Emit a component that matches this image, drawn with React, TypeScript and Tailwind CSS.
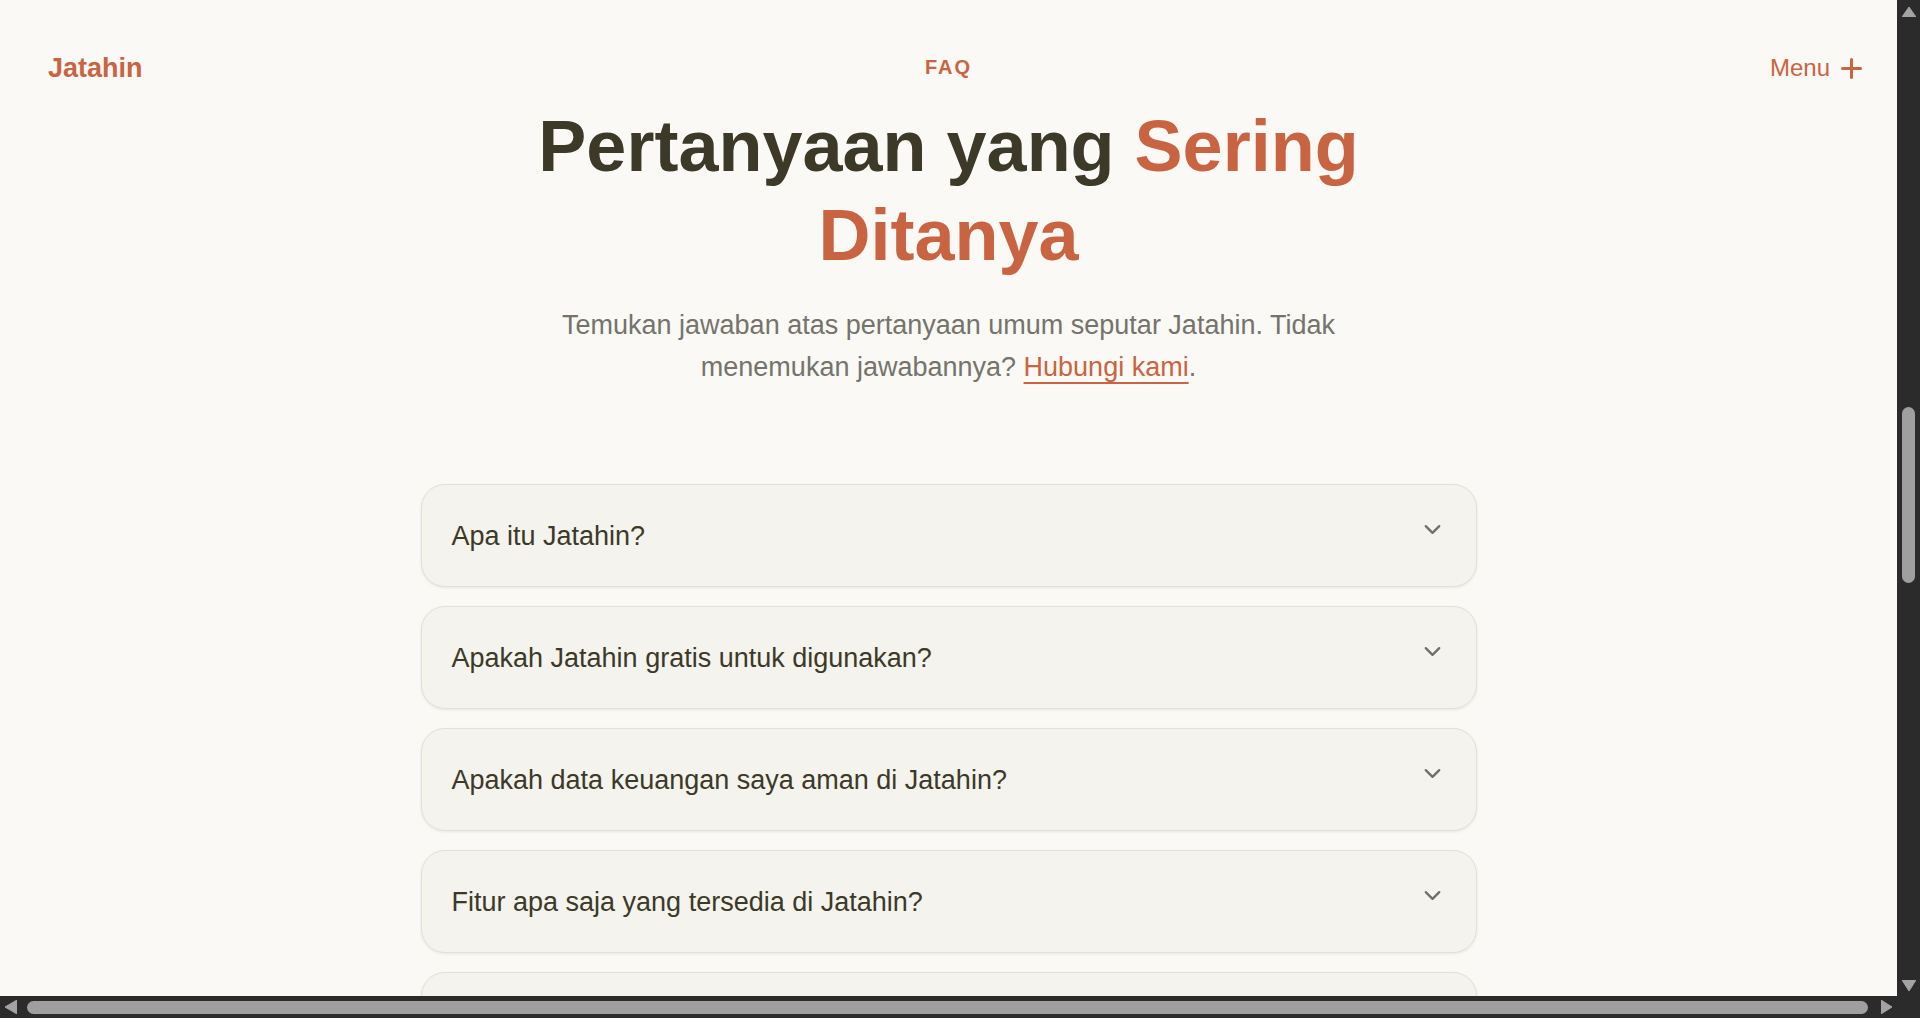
import { useState } from 'react'
//Icons
import { ChevronDown } from 'lucide-react'

interface IFaq {
  question: string
  answer: string
}

const faqs: IFaq[] = [
  {
    question: 'Apa itu Jatahin?',
    answer: 'Jatahin adalah aplikasi untuk membagi dan mencatat jatah keuangan harianmu dengan mudah.',
  },
  {
    question: 'Apakah Jatahin gratis untuk digunakan?',
    answer: 'Ya, semua fitur utama Jatahin bisa digunakan secara gratis.',
  },
  {
    question: 'Apakah data keuangan saya aman di Jatahin?',
    answer: 'Data kamu disimpan dengan enkripsi dan tidak pernah dibagikan ke pihak lain.',
  },
  {
    question: 'Fitur apa saja yang tersedia di Jatahin?',
    answer: 'Pencatatan pengeluaran, pembagian jatah, laporan bulanan, dan pengingat tagihan.',
  },
  {
    question: 'Bagaimana cara mulai menggunakan Jatahin?',
    answer: 'Daftar dengan email kamu, lalu atur jatah pertama dalam hitungan menit.',
  },
]

const FaqItem: React.FC<IFaq> = ({ question, answer }) => {
  const [open, setOpen] = useState(false)

  return (
    <div className="w-[1056px] mx-auto rounded-[24px] border border-[#e2e0d9] bg-[#f4f3ee] shadow-[0_1px_3px_rgba(0,0,0,0.08)]">
      <button
        onClick={() => setOpen(!open)}
        className="flex w-full items-start justify-between px-[30px] pt-[31px] pb-[29px] text-left"
      >
        <span className="text-[27px] leading-[41px] text-[#3d3929]">{question}</span>
        <ChevronDown
          size={27}
          strokeWidth={2}
          className={`shrink-0 text-[#6f6e69] transition-transform ${open ? 'rotate-180' : ''}`}
        />
      </button>
      {open && (
        <p className="px-[30px] pb-[30px] -mt-[12px] text-[24px] leading-[38px] text-[#75736c]">{answer}</p>
      )}
    </div>
  )
}

// dark classic scrollbar pieces
const Tri = ({ dir, w, h }: { dir: 'up' | 'down' | 'left' | 'right'; w: number; h: number }) => {
  const points = {
    up: `${w / 2},0 ${w},${h} 0,${h}`,
    down: `0,0 ${w},0 ${w / 2},${h}`,
    left: `${w},0 ${w},${h} 0,${h / 2}`,
    right: `0,0 ${w},${h / 2} 0,${h}`,
  }[dir]
  return (
    <svg width={w} height={h} viewBox={`0 0 ${w} ${h}`} className="shrink-0">
      <polygon points={points} fill="#a3a3a3" stroke="#a3a3a3" strokeWidth={1} strokeLinejoin="round" />
    </svg>
  )
}

const App = () => {
  return (
    <div className="flex h-screen w-screen flex-col overflow-hidden bg-[#2b2b2b] font-['Liberation_Sans',Arial,sans-serif]">
      <div className="flex min-h-0 flex-1">
        <main className="min-w-0 flex-1 overflow-hidden bg-[#faf9f5]">
          <header className="mt-[48px] grid h-[40px] grid-cols-[1fr_auto_1fr] items-center px-[35px]">
            <a className="ml-[13px] justify-self-start text-[27px] font-bold text-[#c96442]">Jatahin</a>
            <span className="-mt-[2px] text-[20px] font-bold tracking-[2px] text-[#c96442]">FAQ</span>
            <button className="flex items-center gap-[11px] justify-self-end text-[24px] text-[#c96442]">
              Menu
              <svg width="21" height="21" viewBox="0 0 21 21">
                <path d="M10.5 1.5v18M1.5 10.5h18" stroke="currentColor" strokeWidth="3" strokeLinecap="round" />
              </svg>
            </button>
          </header>

          <section className="text-center">
            <h1 className="mx-auto mt-[14px] max-w-[900px] text-[72px] font-bold leading-[89px] text-[#3d3929]">
              Pertanyaan yang <span className="text-[#c96442]">Sering Ditanya</span>
            </h1>
            <p className="mx-auto mt-[24px] max-w-[840px] text-[27px] leading-[42px] text-[#75736c]">
              Temukan jawaban atas pertanyaan umum seputar Jatahin. Tidak menemukan jawabannya?{' '}
              <a className="text-[#c96442] underline decoration-[2px] underline-offset-[6px]">Hubungi kami</a>.
            </p>
          </section>

          <div className="mt-[96px] flex flex-col gap-[19px]">
            {faqs.map((faq) => (
              <FaqItem key={faq.question} {...faq} />
            ))}
          </div>
        </main>

        <div className="flex w-[23px] shrink-0 flex-col items-center bg-[#2b2b2b]">
          <div className="mt-[7px]">
            <Tri dir="up" w={14} h={10} />
          </div>
          <div className="mt-[390px] h-[176px] w-[13px] rounded-full bg-[#9f9f9f]" />
          <div className="mb-[5px] mt-auto">
            <Tri dir="down" w={14} h={11} />
          </div>
        </div>
      </div>

      <div className="flex h-[22px] shrink-0 items-center bg-[#2b2b2b]">
        <div className="ml-[5px]">
          <Tri dir="left" w={12} h={14} />
        </div>
        <div className="ml-[10px] h-[13px] flex-1 rounded-full bg-[#9f9f9f]" />
        <div className="ml-[13px]">
          <Tri dir="right" w={11} h={14} />
        </div>
        <div className="w-[5px]" />
        <div className="h-full w-[23px] bg-[#2b2b2b]" />
      </div>
    </div>
  )
}

export default App
